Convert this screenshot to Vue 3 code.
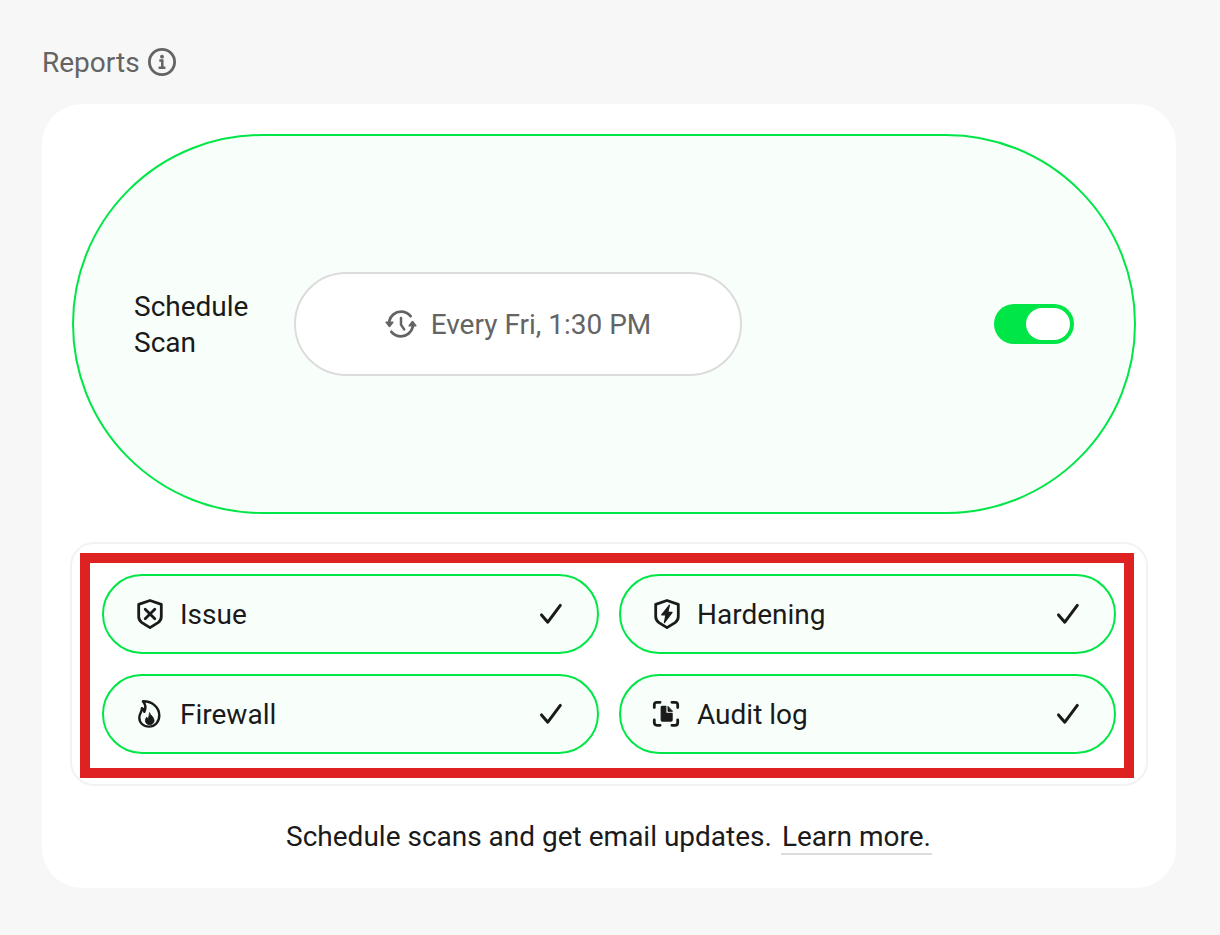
<script setup>
import { ref } from 'vue'

const scheduled = ref(true)
const reports = ref([
  { id: 'issue', label: 'Issue', on: true },
  { id: 'hardening', label: 'Hardening', on: true },
  { id: 'firewall', label: 'Firewall', on: true },
  { id: 'audit', label: 'Audit log', on: true },
])
</script>

<template>
  <main class="page">
    <header class="heading">
      <h1 class="text">Reports</h1>
      <button class="info" type="button" aria-label="About reports">
        <svg viewBox="0 0 28 28" width="28" height="28" fill="none" stroke="currentColor" stroke-width="2.8">
          <circle cx="14" cy="14" r="12.6" />
          <path d="M11.3 12.6h3v6.600M10.600 19.700h6.800" stroke-width="2.500" />
          <circle cx="14" cy="8.700" r="1.900" fill="currentColor" stroke="none" />
        </svg>
      </button>
    </header>

    <section class="card">
      <div class="schedule">
        <label class="schedule-label text" for="scan-toggle">Schedule Scan</label>
        <button class="time" type="button">
          <svg viewBox="0 0 32 32" width="32" height="32" fill="none" stroke="currentColor" stroke-width="2.8" stroke-linecap="round" stroke-linejoin="round">
            <path d="M4.200 13.200C5.400 7.600 10.300 3.700 16 3.700c3.700 0 7.200 1.700 9.600 4.500" />
            <path d="M27.800 18.800C26.600 24.400 21.700 28.300 16 28.300c-3.700 0-7.200-1.700-9.600-4.500" />
            <path d="M1.200 14.200h6.600l-3.300 4.200zM24.200 17.800h6.600l-3.300-4.200z" fill="currentColor" stroke-width="1.600" />
            <path d="M16 10v6.800l3.200 4.600" stroke-width="2.500" />
          </svg>
          <span class="text">Every Fri, 1:30 PM</span>
        </button>
        <input id="scan-toggle" v-model="scheduled" class="toggle" type="checkbox" role="switch" />
      </div>

      <div class="options">
        <label v-for="item in reports" :key="item.id" class="option" :for="item.id">
          <input :id="item.id" v-model="item.on" class="tick-input" type="checkbox" />
          <svg class="icon" viewBox="0 0 32 32" width="32" height="32" fill="none" stroke="currentColor" stroke-width="2.800" stroke-linecap="round" stroke-linejoin="round">
            <template v-if="item.id === 'issue' || item.id === 'hardening'">
              <path d="M16 2.500 27.300 6.300v12.200c0 2.500-1.200 4.700-3.200 6.100L16 29.600l-8.100-5c-2-1.400-3.200-3.600-3.200-6.100V6.300z" />
              <path v-if="item.id === 'issue'" d="m11.200 11.200 9.600 9.600M20.800 11.200l-9.600 9.600" />
              <path v-else d="M18.400 7.200 10.700 16.800h4.200l-1.500 7.800 7.700-10.200h-4.300z" fill="currentColor" stroke-width="1.200" />
            </template>
            <template v-else-if="item.id === 'firewall'">
              <path d="M8.900 3.300c9.600-.2 16.400 6.300 16.400 14.300 0 6.300-4.400 11-10.300 11S5.300 24.700 5.300 19.500c0-3.900 2.600-5.300 2.600-9.300 1.500.6 2.300 2.100 2.400 3.700 1.700-3.600 1.500-7.600-1.400-10.600z" stroke-width="2.400" />
              <path d="M15.500 15c.3 1.600 4.600 4.200 4.600 7.500 0 2.600-1.900 4.200-4.400 4.200s-4.300-1.600-4.300-4c0-1.600.7-2.600 1.100-3.400.8.300 1.200.8 1.500 1.600.9-1.700 1.300-3.700 1.500-5.900z" fill="currentColor" stroke-width=".8" />
            </template>
            <template v-else>
              <path d="M3.300 9.500V6.800c0-1.400 1.100-2.500 2.500-2.500h3.300M20.900 4.300h3.300c1.400 0 2.500 1.100 2.500 2.500v2.700M26.700 22v2.800c0 1.400-1.100 2.500-2.500 2.500h-3.300M9.100 27.300H5.800c-1.400 0-2.500-1.100-2.500-2.500V22" />
              <path d="M10.200 9.300c0-.7.400-1 1-1h3.600v6.500c0 .4.200.6.600.6h5.700v6.600c0 .7-.4 1.100-1.100 1.100h-8.700c-.7 0-1.100-.4-1.100-1.100z" fill="currentColor" stroke-width="1.200" />
              <path d="M17 8.700v4.600h4.200z" fill="currentColor" stroke-width="1" />
            </template>
          </svg>
          <span class="option-label text">{{ item.label }}</span>
          <svg v-show="item.on" class="check" viewBox="0 0 24 24" width="24" height="24" fill="none" stroke="currentColor" stroke-width="3" stroke-linecap="round" stroke-linejoin="round">
            <path d="m2.500 12.900 6.300 7.300L21.300 3.400" />
          </svg>
        </label>
        <div class="highlight" aria-hidden="true"></div>
      </div>

      <p class="note">Schedule scans and get email updates. <a href="#">Learn more.</a></p>
    </section>
  </main>
</template>

<style>
html,
body {
  background: #f7f7f7;
}
</style>

<style scoped>
.page {
  padding: 43px 44px 44px 42px;
  color: #1a1a1a;
  font-family: Roboto, "Liberation Sans", sans-serif;
  font-size: 28px;
  line-height: 36px;
}

.heading {
  display: flex;
  align-items: center;
  gap: 8px;
  margin-bottom: 23px;
  color: #646464;
}

h1 {
  margin: 0;
  font: inherit;
}

.text {
  padding-top: 2px;
}

button {
  padding: 0;
  border: 0;
  background: none;
  color: #646464;
  font: inherit;
  cursor: pointer;
}

svg {
  display: block;
  flex: none;
}

.card {
  padding: 30px 30px 32px;
  border-radius: 40px;
  background: #fff;
}

.schedule {
  display: flex;
  align-items: center;
  box-sizing: border-box;
  min-height: 380px;
  margin-right: 10px;
  padding: 0 60px;
  border: 2px solid #00e646;
  border-radius: 190px;
  background: #f8fffb;
}

.schedule-label {
  width: 160px;
}

.time {
  display: flex;
  align-items: center;
  justify-content: center;
  gap: 14px;
  flex: 0 1 448px;
  height: 104px;
  border: 2px solid #dcdcdc;
  border-radius: 52px;
  background: #fff;
}

.toggle {
  appearance: none;
  display: flex;
  justify-content: flex-start;
  box-sizing: border-box;
  width: 80px;
  height: 40px;
  margin: 0 0 0 auto;
  padding: 4px;
  border-radius: 20px;
  background: #c8c8c8;
  cursor: pointer;
}

.toggle::before {
  content: "";
  width: 44px;
  height: 32px;
  border-radius: 16px;
  background: #fff;
}

.toggle:checked {
  justify-content: flex-end;
  background: #00e646;
}

.options {
  position: relative;
  display: grid;
  grid-template-columns: 1fr 1fr;
  gap: 20px;
  margin: 28px -2px 32px;
  padding: 30px;
  border: 2px solid #f2f2f2;
  border-radius: 24px;
}

.option {
  position: relative;
  display: flex;
  align-items: center;
  box-sizing: border-box;
  height: 80px;
  padding: 0 34px 0 30px;
  border: 2px solid #00e646;
  border-radius: 40px;
  background: #f8fffb;
  cursor: pointer;
}

.tick-input {
  position: absolute;
  inset: 0;
  width: 100%;
  height: 100%;
  margin: 0;
  opacity: 0;
  cursor: pointer;
}

.option-label {
  flex: 1;
  margin-left: 14px;
}

.highlight {
  position: absolute;
  inset: 9px 12px 6px 8px;
  border: 10px solid #de2121;
  pointer-events: none;
}

.note {
  margin: 0;
  line-height: 38px;
  text-align: center;
}

.note a {
  margin-left: 2px;
  padding: 0 1px;
  border-bottom: 2px solid #dcdcdc;
  color: inherit;
  text-decoration: none;
}
</style>
